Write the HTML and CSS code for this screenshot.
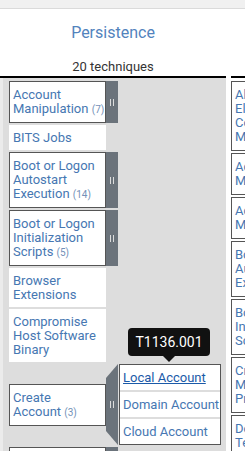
FILE: index.html
```html
<!DOCTYPE html>
<html lang="en">
<head>
    <meta charset="UTF-8">
    <title>Persistence</title>
    <link rel="stylesheet" href="styles.css">
</head>
<body>
    <div class="toolbar"></div>

    <div class="matrix">
        <div class="tactic">
            <div class="tactic-head">
                <div class="tactic-name">Persistence</div>
                <div class="tactic-count">20 techniques</div>
            </div>
            <div class="tactic-body">
                <div class="tech-row">
                    <div class="tech has-subs">Account Manipulation&nbsp;<span class="count">(7)</span></div>
                    <div class="sidebar"><span class="grip"></span></div>
                </div>
                <div class="tech-row">
                    <div class="tech">BITS Jobs</div>
                </div>
                <div class="tech-row">
                    <div class="tech has-subs">Boot or Logon Autostart Execution&nbsp;<span class="count">(14)</span></div>
                    <div class="sidebar"><span class="grip"></span></div>
                </div>
                <div class="tech-row">
                    <div class="tech has-subs">Boot or Logon Initialization Scripts&nbsp;<span class="count">(5)</span></div>
                    <div class="sidebar"><span class="grip"></span></div>
                </div>
                <div class="tech-row">
                    <div class="tech">Browser Extensions</div>
                </div>
                <div class="tech-row">
                    <div class="tech">Compromise Host Software Binary</div>
                </div>
                <div class="tech-row expanded">
                    <div class="tech has-subs">Create Account&nbsp;<span class="count">(3)</span></div>
                    <div class="sidebar open"><span class="grip"></span></div>
                    <div class="subs">
                        <div class="tooltip">T1136.001</div>
                        <a class="sub hover">Local Account</a>
                        <a class="sub">Domain Account</a>
                        <a class="sub">Cloud Account</a>
                    </div>
                </div>
                <div class="tech-row">
                    <div class="tech has-subs">Create or Modify System Process&nbsp;<span class="count">(5)</span></div>
                    <div class="sidebar"><span class="grip"></span></div>
                </div>
            </div>
        </div>

        <div class="tactic">
            <div class="tactic-head">
                <div class="tactic-name">Privilege Escalation</div>
                <div class="tactic-count">14 techniques</div>
            </div>
            <div class="tactic-body plain">
                <div class="tech-row">
                    <div class="tech has-subs">Abuse Elevation Control Mechanism&nbsp;<span class="count">(6)</span></div>
                    <div class="sidebar"><span class="grip"></span></div>
                </div>
                <div class="tech-row">
                    <div class="tech has-subs">Access Token Manipulation&nbsp;<span class="count">(5)</span></div>
                    <div class="sidebar"><span class="grip"></span></div>
                </div>
                <div class="tech-row">
                    <div class="tech has-subs">Account Manipulation&nbsp;<span class="count">(7)</span></div>
                    <div class="sidebar"><span class="grip"></span></div>
                </div>
                <div class="tech-row">
                    <div class="tech has-subs">Boot or Logon Autostart Execution&nbsp;<span class="count">(14)</span></div>
                    <div class="sidebar"><span class="grip"></span></div>
                </div>
                <div class="tech-row">
                    <div class="tech has-subs">Boot or Logon Initialization Scripts&nbsp;<span class="count">(5)</span></div>
                    <div class="sidebar"><span class="grip"></span></div>
                </div>
                <div class="tech-row">
                    <div class="tech has-subs">Create or Modify System Process&nbsp;<span class="count">(5)</span></div>
                    <div class="sidebar"><span class="grip"></span></div>
                </div>
                <div class="tech-row">
                    <div class="tech has-subs">Domain or Tenant Policy Modification&nbsp;<span class="count">(2)</span></div>
                    <div class="sidebar"><span class="grip"></span></div>
                </div>
            </div>
        </div>
    </div>
</body>
</html>
```

FILE: styles.css
```css
html, body {
    overflow: hidden;
}
body {
    margin: 0;
    font-family: Roboto, "Helvetica Neue", sans-serif;
    background-color: #fff;
}
.toolbar {
    height: 8px;
    background-color: #f0f0f0;
    border-bottom: 1px solid #dadada;
}
.matrix {
    display: flex;
    align-items: flex-start;
}
.tactic {
    width: 226px;
    flex-shrink: 0;
}
.tactic + .tactic {
    margin-left: 5px;
}
.tactic-head {
    height: 69px;
    box-sizing: border-box;
    padding-top: 14px;
    text-align: center;
    border-bottom: 2px solid #000;
}
.tactic-name {
    font-size: 16px;
    line-height: 20px;
    color: #5283bd;
}
.tactic-count {
    margin-top: 16px;
    font-size: 13px;
    line-height: 16px;
    color: #333;
}
.tactic-body {
    min-height: 400px;
    padding: 3px 0 0 6px;
    background-color: #ddd;
    border-left: 3px solid #ebebeb;
}
.tactic-body.plain {
    background-color: #fff;
    border-left: none;
    padding-left: 0;
}
.tech-row {
    display: flex;
    margin-bottom: 2px;
}
.tech {
    width: 97px;
    box-sizing: border-box;
    padding: 6px 0 5px 4px;
    background-color: #fff;
    color: #4677b2;
    font-size: 13px;
    line-height: 14px;
}
.tech.has-subs {
    border: 1px solid #555;
    padding-left: 3px;
}
.plain .tech {
    width: 92px;
}
.count {
    font-size: 10px;
    color: #7391b8;
}
.sidebar {
    width: 12px;
    display: flex;
    align-items: center;
    justify-content: center;
    background-color: #6b737b;
}
.grip {
    width: 2px;
    height: 7px;
    border-left: 1px solid #dcdcdc;
    border-right: 1px solid #dcdcdc;
}
.tech-row.expanded {
    align-items: center;
}
.sidebar.open {
    align-self: stretch;
    clip-path: polygon(0 14px, 100% 0, 100% 100%, 0 calc(100% - 14px));
}
.subs {
    position: relative;
    width: 102px;
    box-sizing: border-box;
    margin-left: 1px;
    display: flex;
    flex-direction: column;
    gap: 2px;
    border: 1px solid #555;
    background-color: #ddd;
}
.sub {
    padding: 6px 0 5px 3px;
    background-color: #fff;
    color: #4677b2;
    font-size: 13px;
    line-height: 14px;
    white-space: nowrap;
}
.sub.hover {
    color: #1b5aa8;
    text-decoration: underline;
}
.tooltip {
    position: absolute;
    left: 8px;
    bottom: calc(100% + 9px);
    width: 82px;
    height: 28px;
    background-color: #111;
    color: #fff;
    font-size: 14px;
    line-height: 28px;
    text-align: center;
    border-radius: 4px;
}
.tooltip::after {
    content: "";
    position: absolute;
    left: 50%;
    top: 100%;
    margin-left: -6px;
    border: 6px solid transparent;
    border-top-color: #111;
}
```
